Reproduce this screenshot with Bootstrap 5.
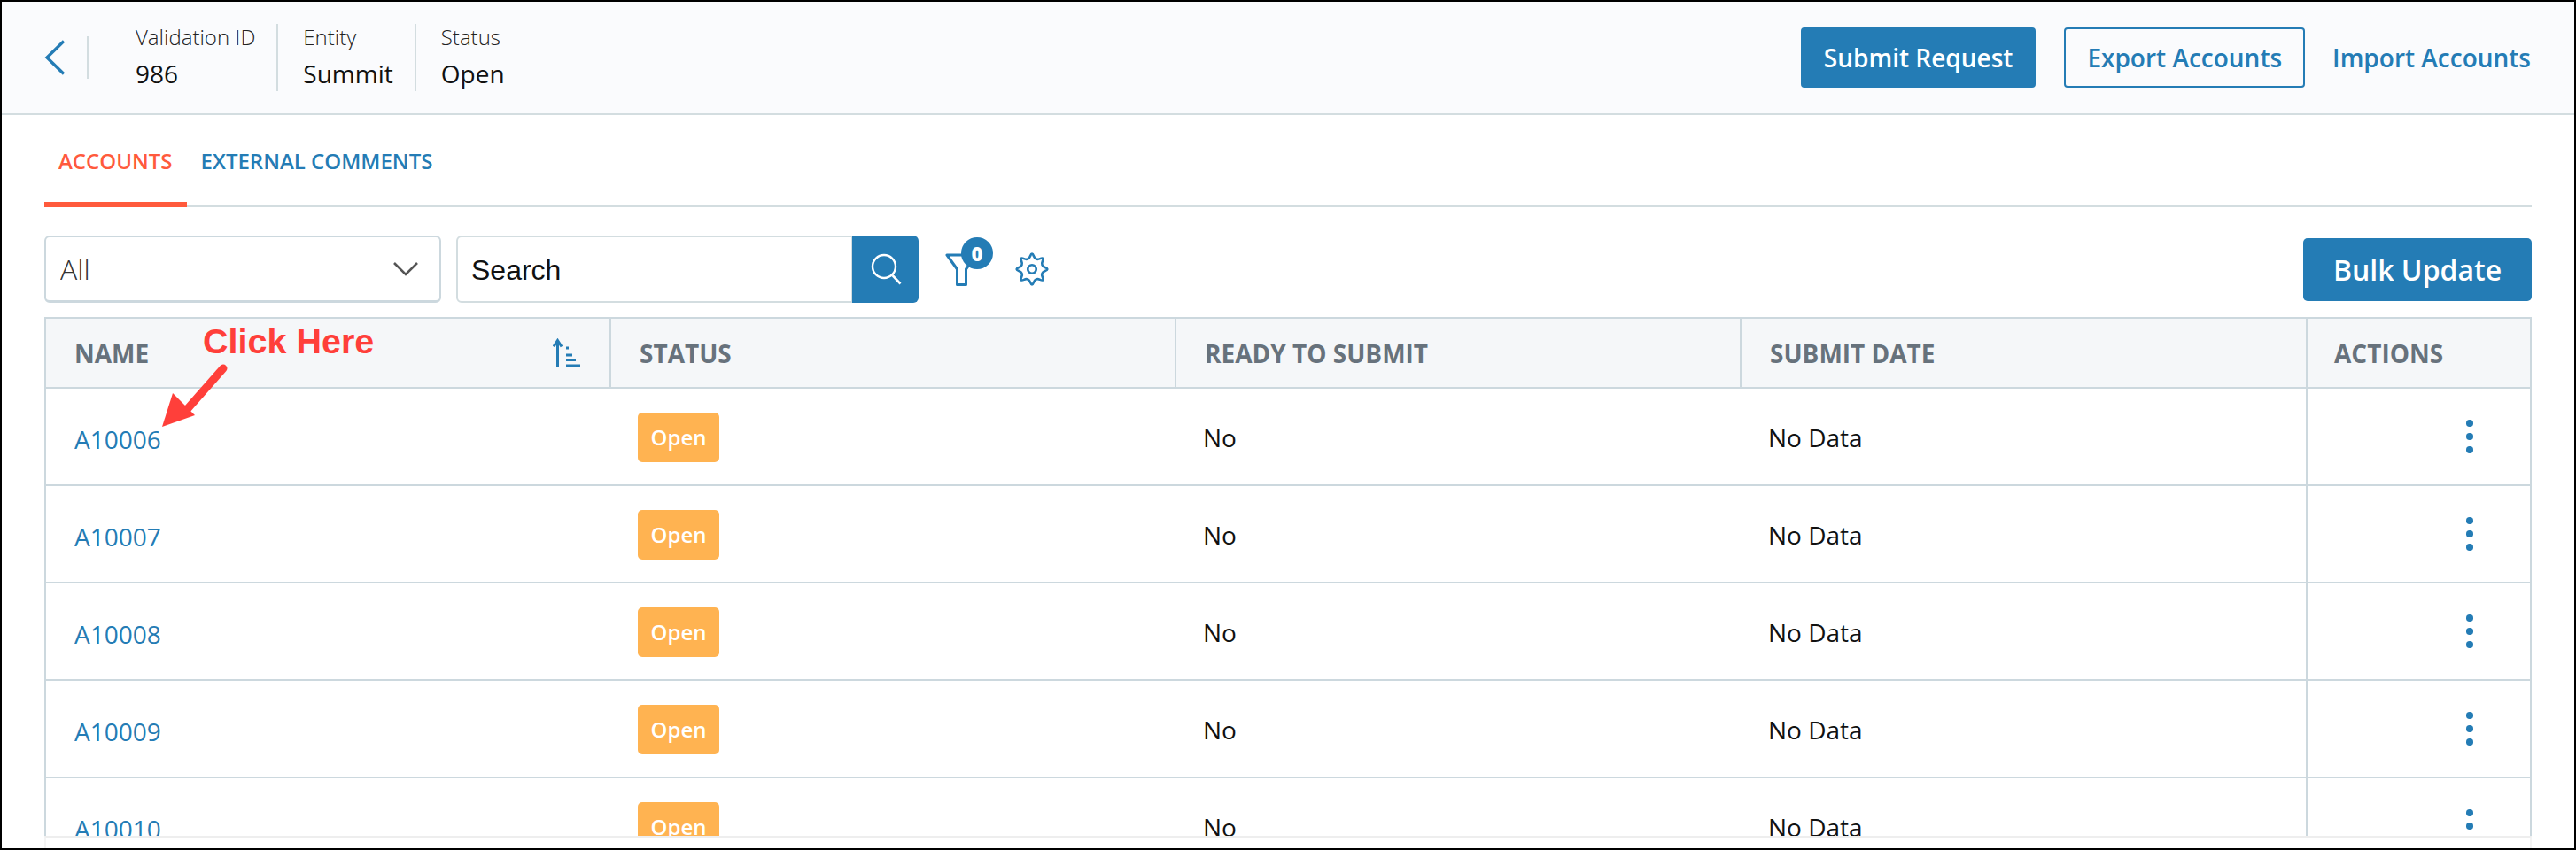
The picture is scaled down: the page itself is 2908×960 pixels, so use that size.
<!DOCTYPE html>
<html lang="en">
<head>
<meta charset="utf-8">
<title>Validation accounts</title>
<link href="https://cdn.jsdelivr.net/npm/bootstrap@5.3.0/dist/css/bootstrap.min.css" rel="stylesheet">
<style>
html,body{margin:0;background:#fff;}
body{font-family:"Open Sans",sans-serif;color:#111;}
.shot-frame{width:2908px;height:960px;border:2px solid #000;overflow:hidden;position:relative;background:#fff;}
.top-head{height:128px;flex:none;background:#fafbfd;border-bottom:2px solid #d3dde0;padding:0 49px 0 48px;}
.back-link{width:50px;height:48px;border-right:2px solid #d3dde0;}
.meta-item{height:76px;padding:0 24px 0 28px;border-left:2px solid #d3dde0;}
.meta-item:first-of-type{border-left:0;padding-left:53px;}
.meta-label{font-size:24px;font-weight:300;line-height:30px;color:#222;margin-top:1px;margin-bottom:4px;}
.meta-value{font-size:28px;line-height:44px;color:#111;}
.act-btn{font-size:28px;font-weight:600;height:68px;padding:0 24px;border-radius:4px;line-height:1;}
.act-fill{background:#247cb5;border:2px solid #247cb5;color:#fff;}
.act-line{background:transparent;border:2px solid #247cb5;color:#247cb5;margin-left:32px;}
.act-text{font-size:28px;font-weight:600;color:#247cb5;text-decoration:none;margin-left:31px;}
.tab-bar{margin:0 48px;height:104px;border-bottom:2px solid #d3dde0;flex:none;}
.tab-link{font-size:24px;font-weight:600;color:#247cb5;text-decoration:none;height:104px;padding:0 16px 0;display:flex;align-items:center;margin-bottom:-2px;}
.tab-on{color:#ff5a3c;border-bottom:6px solid #ff5a3c;padding-top:6px;}
.tool-row{margin:32px 48px 16px;height:76px;flex:none;}
.pick-box{width:448px;height:76px;font-size:32px;font-weight:300;color:#333;border:2px solid #ccd8de;border-bottom-width:3px;border-radius:6px;padding:0 60px 0 16px;background-size:28px 16px;background-position:right 24px center;background-image:url("data:image/svg+xml,%3csvg xmlns='http://www.w3.org/2000/svg' viewBox='0 0 28 16'%3e%3cpath fill='none' stroke='%23555' stroke-width='2.6' d='M1 1l13 13L27 1'/%3e%3c/svg%3e");}
.find-group{width:522px;margin-left:17px;}
.find-input{height:76px;font-family:"Liberation Sans",Arial,sans-serif;font-size:32px;color:#111;border:2px solid #d3dde0;padding:2px 15px 0;border-radius:6px 0 0 6px;}
.find-input::placeholder{color:#111;opacity:1;}
.find-btn{width:75px;height:76px;background:#247cb5;border:0;border-radius:0 6px 6px 0;padding:0;}
.filter-wrap{width:60px;height:76px;margin-left:29px;position:relative;}
.filter-count{position:absolute;left:19px;top:2px;width:36px;height:36px;border-radius:50%;background:#247cb5;color:#fff;font-size:22px;font-weight:800;}
.funnel-mark{position:absolute;left:1px;top:18px;}
.gear-wrap{margin-left:20px;}
.bulk-btn{font-size:32px;font-weight:600;height:71px;width:258px;background:#247cb5;color:#fff;border:0;border-radius:5px;padding:0;margin-top:3px;}
.grid-wrap{margin:0 48px;flex:1 1 0;min-height:0;overflow:hidden;border:2px solid #ccd8de;border-bottom:0;}
.acct-grid{table-layout:fixed;width:2804px;margin:0;border-collapse:separate;border-spacing:0;}
.acct-grid>thead>tr>th{background:#f5f7f9;color:#67727c;font-size:28px;font-weight:700;height:79px;padding:0 32px;border-bottom:2px solid #ccd8de;border-left:2px solid #ccd8de;vertical-align:middle;box-shadow:none;}
.acct-grid>thead>tr>th:first-child{border-left:0;}
.acct-grid>thead>tr>th:last-child{padding-left:30px;padding-right:0;}
.acct-grid>tbody>tr>td{height:110px;padding:2px 32px 0;font-size:28px;color:#111;border-bottom:2px solid #ccd8de;vertical-align:middle;box-shadow:none;}
.acct-grid>tbody>tr>td.act-cell{border-left:2px solid #ccd8de;padding:0;}
.acct-link{color:#247cb5;text-decoration:none;position:relative;top:2px;}
.state-tag{background:#ffb351;color:#fff;font-size:24px;font-weight:600;width:92px;height:56px;border-radius:5px;padding:0;line-height:56px;display:inline-block;}
.dot-stack{width:7px;gap:7.5px;margin-left:179px;}
.dot-stack i{display:block;width:7.5px;height:7.5px;border-radius:50%;background:#247cb5;}
.grid-foot{margin:0 48px;height:14px;flex:none;border-top:2px solid #eee;border-left:2px solid #f4f4f4;border-right:2px solid #f4f4f4;}
.note-text{position:absolute;left:227px;top:360px;font-family:"Liberation Sans",Arial,sans-serif;font-weight:700;font-size:39.5px;line-height:46px;color:#ff3f3a;}
.note-arrow{position:absolute;left:172px;top:402px;}
</style>
</head>
<body>
<div class="shot-frame d-flex flex-column">
  <header class="top-head d-flex align-items-center">
    <a href="#" class="back-link d-flex align-items-center" aria-label="Back">
      <svg width="24" height="40" viewBox="0 0 24 40"><path d="M22 1.5L3 20l19 18.5" fill="none" stroke="#247cb5" stroke-width="3.4"/></svg>
    </a>
    <div class="meta-item d-flex flex-column justify-content-center">
      <div class="meta-label">Validation ID</div><div class="meta-value">986</div>
    </div>
    <div class="meta-item d-flex flex-column justify-content-center">
      <div class="meta-label">Entity</div><div class="meta-value">Summit</div>
    </div>
    <div class="meta-item d-flex flex-column justify-content-center">
      <div class="meta-label">Status</div><div class="meta-value">Open</div>
    </div>
    <div class="ms-auto d-flex align-items-center">
      <button type="button" class="btn act-btn act-fill">Submit Request</button>
      <button type="button" class="btn act-btn act-line">Export Accounts</button>
      <a href="#" class="act-text">Import Accounts</a>
    </div>
  </header>

  <nav class="tab-bar d-flex">
    <a href="#" class="tab-link tab-on">ACCOUNTS</a>
    <a href="#" class="tab-link">EXTERNAL COMMENTS</a>
  </nav>

  <div class="tool-row d-flex">
    <select class="form-select pick-box" aria-label="Filter"><option>All</option></select>
    <div class="input-group flex-nowrap find-group">
      <input class="form-control find-input" type="text" placeholder="Search" aria-label="Search">
      <button type="button" class="btn find-btn" aria-label="Search">
        <svg width="36" height="38" viewBox="0 0 36 38"><circle cx="16" cy="16" r="13" fill="none" stroke="#fff" stroke-width="2.4"/><path d="M25.5 26l9 9.5" stroke="#fff" stroke-width="2.6" fill="none"/></svg>
      </button>
    </div>
    <div class="filter-wrap">
      <svg class="funnel-mark" width="40" height="44" viewBox="0 0 40 44"><path d="M2 4h33L23.5 20v17.500h-10V20z" fill="none" stroke="#247cb5" stroke-width="3" stroke-linejoin="round"/></svg>
      <span class="filter-count d-flex align-items-center justify-content-center">0</span>
    </div>
    <div class="gear-wrap d-flex align-items-center">
      <svg width="38" height="38" viewBox="-20 -20 40 40"><path d="M15.58 -2.1Q21 0 15.58 2.1Q10.16 4.21 12.5 9.53Q14.85 14.85 9.53 12.5Q4.21 10.16 2.1 15.58Q0 21 -2.1 15.58Q-4.21 10.16 -9.53 12.5Q-14.85 14.85 -12.5 9.53Q-10.16 4.21 -15.58 2.1Q-21 0 -15.58 -2.1Q-10.16 -4.21 -12.5 -9.53Q-14.85 -14.85 -9.53 -12.5Q-4.21 -10.16 -2.1 -15.58Q0 -21 2.1 -15.58Q4.21 -10.16 9.53 -12.5Q14.85 -14.85 12.5 -9.53Q10.16 -4.21 15.58 -2.1Z" fill="none" stroke="#247cb5" stroke-width="2.800"/><circle r="5" fill="none" stroke="#247cb5" stroke-width="2.800"/></svg>
    </div>
    <button type="button" class="btn bulk-btn ms-auto">Bulk Update</button>
  </div>

  <div class="grid-wrap">
    <table class="table acct-grid">
      <colgroup><col style="width:636px"><col style="width:638px"><col style="width:638px"><col style="width:639px"><col style="width:253px"></colgroup>
      <thead>
        <tr>
          <th>
            <div class="d-flex align-items-center justify-content-between">
              <span>NAME</span>
              <svg width="32" height="34" viewBox="0 0 32 34" class="me-n1"><path d="M5.500 33V3M1 9.500L5.500 2.500L10 9.500" fill="none" stroke="#247cb5" stroke-width="3"/><path d="M15 11h3M15 19h7M15 24.500h11M15 31h16" stroke="#247cb5" stroke-width="2.800" fill="none"/></svg>
            </div>
          </th>
          <th>STATUS</th><th>READY TO SUBMIT</th><th>SUBMIT DATE</th><th>ACTIONS</th>
        </tr>
      </thead>
      <tbody>
        <tr><td><a href="#" class="acct-link">A10006</a></td><td><span class="badge state-tag">Open</span></td><td>No</td><td>No Data</td><td class="act-cell"><div class="dot-stack d-flex flex-column"><i></i><i></i><i></i></div></td></tr>
        <tr><td><a href="#" class="acct-link">A10007</a></td><td><span class="badge state-tag">Open</span></td><td>No</td><td>No Data</td><td class="act-cell"><div class="dot-stack d-flex flex-column"><i></i><i></i><i></i></div></td></tr>
        <tr><td><a href="#" class="acct-link">A10008</a></td><td><span class="badge state-tag">Open</span></td><td>No</td><td>No Data</td><td class="act-cell"><div class="dot-stack d-flex flex-column"><i></i><i></i><i></i></div></td></tr>
        <tr><td><a href="#" class="acct-link">A10009</a></td><td><span class="badge state-tag">Open</span></td><td>No</td><td>No Data</td><td class="act-cell"><div class="dot-stack d-flex flex-column"><i></i><i></i><i></i></div></td></tr>
        <tr><td><a href="#" class="acct-link">A10010</a></td><td><span class="badge state-tag">Open</span></td><td>No</td><td>No Data</td><td class="act-cell"><div class="dot-stack d-flex flex-column"><i></i><i></i><i></i></div></td></tr>
      </tbody>
    </table>
  </div>
  <div class="grid-foot"></div>

  <div class="note-text">Click Here</div>
  <svg class="note-arrow" width="90" height="90" viewBox="0 0 90 90"><path d="M78 12L33 63" stroke="#ff3f3a" stroke-width="9" stroke-linecap="round" fill="none"/><path d="M9 78L21 40L46 65z" fill="#ff3f3a"/></svg>
</div>
<script src="https://cdn.jsdelivr.net/npm/bootstrap@5.3.0/dist/js/bootstrap.bundle.min.js"></script>
</body>
</html>
